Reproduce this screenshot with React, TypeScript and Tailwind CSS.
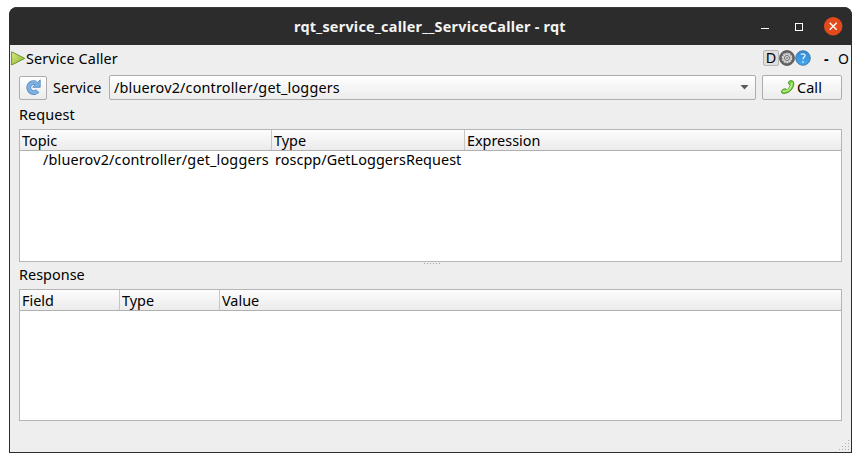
import type { ReactNode } from "react";

function Dot({ className = "" }: { className?: string }) {
  return <span className={`block h-px w-px bg-[#aaaaaa] ${className}`} />;
}

function TitleBar() {
  return (
    <header className="flex h-[38px] shrink-0 items-center rounded-t-[7px] border-t border-[#393939] bg-[#2c2c2c] pr-[9px] text-white">
      <h1 className="flex-1 pl-[285px] text-[14.4px] font-bold leading-5 tracking-[0.25px] whitespace-pre text-[#f4f4f2]">
        rqt_service_caller__ServiceCaller - rqt
      </h1>
      <span className="mt-[3px] mr-[26px] block h-px w-2 bg-white" />
      <span className="mr-[21px] block h-2 w-2 border border-white" />
      <svg className="h-[19px] w-[19px]" viewBox="0 0 19 19">
        <circle cx="9.2" cy="9.2" r="9.2" fill="#e2491b" />
        <path d="M5.7 5.7l7 7M12.7 5.7l-7 7" stroke="#fff" strokeWidth="1.4" />
      </svg>
    </header>
  );
}

function PlayIcon() {
  return (
    <svg className="h-[15px] w-[15px] shrink-0" viewBox="0 0 15 15">
      <defs>
        <linearGradient id="play" x2="1" y2="1">
          <stop offset="0" stopColor="#dcea78" />
          <stop offset="1" stopColor="#86b532" />
        </linearGradient>
      </defs>
      <path d="M.6 .8v13.2L13.8 7.4z" fill="url(#play)" stroke="#5d8b2a" strokeWidth=".9" />
    </svg>
  );
}

function RefreshIcon() {
  return (
    <svg className="-mt-[2px] h-4 w-4" viewBox="0 0 16 16">
      <path d="M12.6 11.8A5 5 0 1 1 10.8 4" fill="none" stroke="#5a8fc6" strokeWidth="4.8" />
      <path d="M15.2 .8v7.5H7.7l2.3-2.4-1.5-1.3 4.2-1.3z" fill="#7aaede" stroke="#5a8fc6" strokeWidth=".9" />
      <path d="M12.4 12A5 5 0 1 1 11.5 4.2" fill="none" stroke="#7eb0e0" strokeWidth="3.2" />
    </svg>
  );
}

function GearIcon() {
  return (
    <svg className="h-4 w-4" viewBox="0 0 16 16">
      <circle cx="8" cy="8" r="7.5" fill="#636363" stroke="#555" strokeWidth=".8" />
      <circle cx="8" cy="8" r="4.6" fill="none" stroke="#d5d5d5" strokeWidth="1.5" strokeDasharray="2.2 .6" />
      <circle cx="8" cy="8" r="4" fill="#d8d8d8" />
      <circle cx="8" cy="8" r="2.5" fill="#e5e5e5" stroke="#686868" strokeWidth="1" />
      <circle cx="8" cy="8" r=".9" fill="#777" />
    </svg>
  );
}

function HelpIcon() {
  return (
    <svg className="h-4 w-4" viewBox="0 0 16 16">
      <defs>
        <linearGradient id="help" x2="0" y2="1">
          <stop offset="0" stopColor="#3587d5" />
          <stop offset="1" stopColor="#43a9ee" />
        </linearGradient>
      </defs>
      <circle cx="8" cy="8" r="7.3" fill="url(#help)" stroke="#3d779f" strokeWidth=".9" />
      <path d="M5.8 4.3c3.2-1.3 5.2.4 3.8 2.2C8.8 7.5 8 7.6 8 9.3" fill="none" stroke="#e5f5ff" strokeWidth="1.3" />
      <circle cx="8" cy="11.8" r=".9" fill="#e5f5ff" />
    </svg>
  );
}

function PhoneIcon() {
  return (
    <svg className="-mt-px h-[14px] w-[14px]" viewBox="0 0 14 14">
      <path
        d="M7.8 1.6C8.6.7 10.6.3 11.6.9c1.4.9 1.5 3.6.7 5.6-1.2 3.3-4.3 6.2-7.9 6.8-1.8.3-3.5 0-3.9-.9-.3-1 .3-2.2 1.1-2.7 1.2-.8 2.7-1.3 3.5-.6l.7.7C7.1 9.3 8.9 7.2 9.3 5.1L7.8 4c-.5-.5-.5-1.8 0-2.4z"
        fill="#7fd044"
        stroke="#408d20"
        strokeWidth=".9"
      />
      <path d="M1.8 11.3c4.3.8 8.9-3.4 9.3-8.6" fill="none" stroke="#bdf088" strokeWidth="1.4" />
    </svg>
  );
}

const raised = "rounded-[2px] border border-[#adadad] bg-linear-to-b from-white to-[#ececec]";

function HeaderCell({ width, children, last = false }: { width: string; children: ReactNode; last?: boolean }) {
  return (
    <div className={`h-full pl-[2px] leading-[21px] ${width} ${last ? "" : "border-r border-[#c6c6c6]"}`}>
      {children}
    </div>
  );
}

function Table({ height, header, children }: { height: string; header: ReactNode; children?: ReactNode }) {
  return (
    <section className={`mx-[9px] border border-[#b5b5b5] bg-white ${height}`}>
      <div className="flex h-[21px] border-b border-[#b0b0b0] bg-linear-to-b from-[#fdfdfd] to-[#ebebeb]">
        {header}
      </div>
      {children}
    </section>
  );
}

function SizeGrip() {
  return (
    <div className="mt-auto mr-[2px] mb-[2px] grid grid-cols-4 gap-[2px] self-end">
      <Dot className="col-start-4" />
      <Dot className="col-start-3" />
      <Dot />
      <Dot className="col-start-2" />
      <Dot />
      <Dot />
      <Dot />
      <Dot />
      <Dot />
      <Dot />
    </div>
  );
}

export default function App() {
  return (
    <div className="h-[462px] w-[861px] overflow-hidden bg-white pt-[7px] pl-[9px] font-['Noto_Sans','Open_Sans',sans-serif] text-[14.4px] whitespace-nowrap text-black">
      <main className="flex h-[446px] w-[843px] flex-col overflow-hidden rounded-t-[8px] bg-[#2c2c2c]">
        <TitleBar />
        <div className="mx-px mb-px flex min-h-0 flex-1 flex-col bg-[#eeeeee]">
          <div className="flex h-[27px] items-center pl-px">
            <PlayIcon />
            <span className="leading-5 tracking-[0.1px]">Service Caller</span>
            <div className="ml-auto flex items-center pr-[2px]">
              <span className="flex h-4 w-4 items-center justify-center rounded-[2px] border border-[#b7b7b7] bg-[#dedede] leading-4">
                D
              </span>
              <GearIcon />
              <HelpIcon />
              <span className="ml-[13px] w-[14px] font-bold">-</span>
              <span className="text-[14px]">O</span>
            </div>
          </div>

          <div className="flex h-[31px] items-center px-[9px]">
            <button className={`flex h-6 w-7 items-center justify-center ${raised}`}>
              <RefreshIcon />
            </button>
            <span className="ml-[6px] w-[56px] tracking-[0.08px]">Service</span>
            <div className={`flex h-[25px] w-[647px] items-center pr-[6px] pl-[4px] ${raised}`}>
              <span className="flex-1 leading-5 tracking-[0.17px]">/bluerov2/controller/get_loggers</span>
              <svg className="h-[5px] w-[9px]" viewBox="0 0 9 5">
                <path d="M.5 0h8l-4 4.5z" fill="#5b5b5b" />
              </svg>
            </div>
            <button className={`ml-[6px] flex h-[25px] w-20 items-center pl-[18px] ${raised}`}>
              <PhoneIcon />
              <span className="ml-[2px] tracking-[0.1px]">Call</span>
            </button>
          </div>

          <div className="h-[26px] pl-[9px] leading-[24px] tracking-[0.12px]">Request</div>
          <Table
            height="h-[133px]"
            header={
              <>
                <HeaderCell width="w-[252px]">Topic</HeaderCell>
                <HeaderCell width="w-[193px]">Type</HeaderCell>
                <HeaderCell width="flex-1" last>Expression</HeaderCell>
              </>
            }
          >
            <div className="flex h-[18px] leading-[18px]">
              <span className="w-[255px] pl-[23px] tracking-[0.17px]">/bluerov2/controller/get_loggers</span>
              <span className="tracking-[0.06px]">roscpp/GetLoggersRequest</span>
            </div>
          </Table>
          <div className="flex h-[4px] gap-[2px] pt-px pl-[414px]">
            <Dot /><Dot /><Dot /><Dot /><Dot /><Dot />
          </div>
          <div className="h-[23px] pl-[9px] leading-[18px] tracking-[0.04px]">Response</div>
          <Table
            height="h-[132px]"
            header={
              <>
                <HeaderCell width="w-[100px]">Field</HeaderCell>
                <HeaderCell width="w-[100px]">Type</HeaderCell>
                <HeaderCell width="flex-1" last>Value</HeaderCell>
              </>
            }
          />
          <SizeGrip />
        </div>
      </main>
    </div>
  );
}
